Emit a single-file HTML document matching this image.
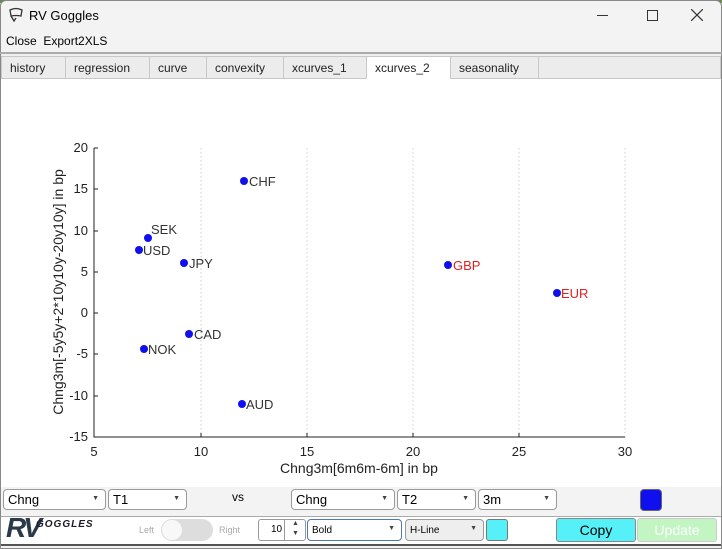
<!DOCTYPE html>
<html><head><style>
*{box-sizing:border-box;margin:0;padding:0}
body{width:722px;height:549px;overflow:hidden;background:#f3f3f3;font-family:"Liberation Sans",sans-serif;position:relative;font-size:12px;color:#000}
.a{position:absolute}
.tab{position:absolute;top:56px;height:23px;border:1px solid #c8c8c8;background:#ececec;font-size:12px;padding:4px 8px;color:#222}
.dd{position:absolute;height:21px;border:1px solid #9a9a9a;border-radius:4px;background:#fff;font-size:13px;padding:2px 4px}
.dd::after{content:"▼";position:absolute;right:6px;top:5px;font-size:7px;color:#444}
</style></head><body>
<div class="a" style="left:0;top:0;width:722px;height:3px;background:#6a8a4a"></div>
<div class="a" style="left:0;top:0;width:722px;height:549px;border:1px solid #888;border-radius:6px 6px 0 0;background:#f3f3f3"></div>
<svg class="a" style="left:8px;top:7px" width="16" height="16" viewBox="0 0 16 16"><path d="M2 3 Q8 0 14 3 L13 9 Q8 8 3 9 Z M3 9 L6 14 L8 11" fill="none" stroke="#333" stroke-width="1.3"/></svg>
<div class="a" style="left:29px;top:8px;font-size:13px">RV Goggles</div>
<div class="a" style="left:597px;top:15px;width:11px;height:1px;background:#333"></div>
<div class="a" style="left:647px;top:10px;width:11px;height:11px;border:1px solid #333"></div>
<svg class="a" style="left:691px;top:9px" width="12" height="12"><path d="M0 0L12 12M12 0L0 12" stroke="#333" stroke-width="1.2"/></svg>
<div class="a" style="left:6px;top:34px;font-size:12px">Close&nbsp; Export2XLS</div>
<div class="a" style="left:0;top:52px;width:722px;height:2px;background:#aaa"></div>
<div class="a" style="left:1px;top:54px;width:720px;height:25px;background:#f0f0f0"></div>
<div class="tab" style="left:1px;width:65px">history</div>
<div class="tab" style="left:65px;width:85px">regression</div>
<div class="tab" style="left:149px;width:58px">curve</div>
<div class="tab" style="left:206px;width:78px">convexity</div>
<div class="tab" style="left:283px;width:84px">xcurves_1</div>
<div class="tab" style="left:366px;width:85px;background:#fff;border-bottom-color:#fff">xcurves_2</div>
<div class="tab" style="left:450px;width:89px">seasonality</div>
<div class="tab" style="left:538px;width:183px"></div>
<div class="a" style="left:1px;top:79px;width:720px;height:408px;background:#fff"></div>
<svg class="a" style="left:0;top:0" width="722" height="487" font-family="Liberation Sans" font-size="13">
<g stroke="#ccc" stroke-dasharray="1.5,2.5"><line x1="201" y1="148" x2="201" y2="437"/><line x1="307" y1="148" x2="307" y2="437"/><line x1="413" y1="148" x2="413" y2="437"/><line x1="519" y1="148" x2="519" y2="437"/><line x1="625" y1="148" x2="625" y2="437"/></g>
<path d="M94 148V437H625" fill="none" stroke="#222"/>
<g stroke="#222"><line x1="94" y1="148" x2="98" y2="148"/><line x1="94" y1="189" x2="98" y2="189"/><line x1="94" y1="231" x2="98" y2="231"/><line x1="94" y1="272" x2="98" y2="272"/><line x1="94" y1="313" x2="98" y2="313"/><line x1="94" y1="354" x2="98" y2="354"/><line x1="94" y1="396" x2="98" y2="396"/><line x1="201" y1="437" x2="201" y2="433"/><line x1="307" y1="437" x2="307" y2="433"/><line x1="413" y1="437" x2="413" y2="433"/><line x1="519" y1="437" x2="519" y2="433"/></g>
<g text-anchor="end" fill="#222"><text x="88" y="152">20</text><text x="88" y="193">15</text><text x="88" y="235">10</text><text x="88" y="276">5</text><text x="88" y="317">0</text><text x="88" y="358">-5</text><text x="88" y="400">-10</text><text x="88" y="441">-15</text></g>
<g text-anchor="middle" fill="#222"><text x="94" y="456">5</text><text x="201" y="456">10</text><text x="307" y="456">15</text><text x="413" y="456">20</text><text x="519" y="456">25</text><text x="625" y="456">30</text></g>
<text x="359" y="473" text-anchor="middle" font-size="14" fill="#222">Chng3m[6m6m-6m] in bp</text>
<text transform="translate(63,292) rotate(-90)" text-anchor="middle" font-size="14" fill="#222">Chng3m[-5y5y+2*10y10y-20y10y] in bp</text>
<g fill="#1010ee"><circle cx="244" cy="181" r="4"/><circle cx="148" cy="238" r="4"/><circle cx="139" cy="250" r="4"/><circle cx="184" cy="263" r="4"/><circle cx="448" cy="265" r="4"/><circle cx="557" cy="293" r="4"/><circle cx="189" cy="334" r="4"/><circle cx="144" cy="349" r="4"/><circle cx="242" cy="404" r="4"/></g>
<g fill="#333"><text x="249" y="186">CHF</text><text x="151" y="234">SEK</text><text x="143" y="255">USD</text><text x="189" y="268">JPY</text><text x="194" y="339">CAD</text><text x="148" y="354">NOK</text><text x="246" y="409">AUD</text></g>
<g fill="#dd2222"><text x="453" y="270">GBP</text><text x="561" y="298">EUR</text></g>
</svg>
<div class="dd" style="left:3px;top:489px;width:103px">Chng</div>
<div class="dd" style="left:108px;top:489px;width:79px">T1</div>
<div class="a" style="left:232px;top:490px;font-size:12px">vs</div>
<div class="dd" style="left:291px;top:489px;width:104px">Chng</div>
<div class="dd" style="left:397px;top:489px;width:79px">T2</div>
<div class="dd" style="left:478px;top:489px;width:79px">3m</div>
<div class="a" style="left:640px;top:489px;width:22px;height:22px;background:#1010ee;border:1px solid #666;border-radius:4px"></div>
<div class="a" style="left:1px;top:516px;width:720px;height:30px;background:#fff;border-top:1px solid #aaa;border-bottom:2px solid #555"></div>
<div class="a" style="left:6px;top:512px;font-style:italic;font-weight:bold;font-size:28px;color:#2a3a4a;letter-spacing:-3px">RV</div>
<div class="a" style="left:36px;top:519px;font-style:italic;font-weight:bold;font-size:10px;color:#1a1a2a;letter-spacing:1px">GOGGLES</div>
<div class="a" style="left:139px;top:525px;font-size:9px;color:#aaa">Left</div>
<div class="a" style="left:161px;top:519px;width:52px;height:22px;background:#ddd;border-radius:11px"><div style="width:22px;height:22px;border-radius:11px;background:#f8f8f8;border:1px solid #ddd"></div></div>
<div class="a" style="left:219px;top:525px;font-size:9px;color:#aaa">Right</div>
<div class="a" style="left:258px;top:519px;width:48px;height:22px;border:1px solid #999;border-radius:3px;background:#fff;font-size:10px;padding:4px 0 0 12px">10</div>
<div class="a" style="left:284px;top:519px;width:22px;height:22px;border-left:1px solid #999;font-size:7px;text-align:center;line-height:10px;color:#444">▲<br>▼</div>
<div class="dd" style="left:307px;top:519px;width:95px;height:22px;border-color:#4a7ab0;font-size:10px;padding-top:5px">Bold</div>
<div class="dd" style="left:405px;top:519px;width:79px;height:22px;background:#eee;font-size:10px;padding-top:5px">H-Line</div>
<div class="a" style="left:486px;top:519px;width:22px;height:22px;background:#55f0f8;border:1px solid #777;border-radius:3px"></div>
<div class="a" style="left:556px;top:518px;width:80px;height:24px;background:#55f0f8;border:1px solid #888;border-radius:3px;font-size:14px;text-align:center;padding-top:3px">Copy</div>
<div class="a" style="left:637px;top:518px;width:80px;height:24px;background:#c2f5c2;border:1px solid #ccc;border-radius:3px;font-size:14px;text-align:center;padding-top:3px;color:#fff">Update</div>
</body></html>
